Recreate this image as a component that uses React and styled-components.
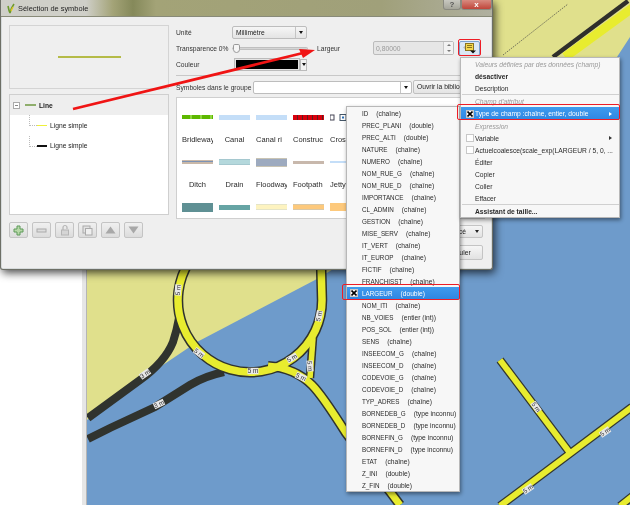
import React from "react";
import styled, {createGlobalStyle} from 'styled-components'

const GlobalStyle = createGlobalStyle`
html, body { margin: 0; padding: 0; background: #fff; }
body { font-family: "Liberation Sans", Arial, sans-serif; font-size: 7px; color: #222; }
`

const Desktop = styled.div`
position: relative;
width: 630px;
height: 505px;
overflow: hidden;
display: flex;
filter: blur(0.25px);
`
const Sidebar = styled.div`
width: 82px;
background: #fff;
`
const Splitter = styled.div`
width: 5px;
background: #e6e6e6;
border-right: 1px solid #b5b5b5;
box-sizing: border-box;
`
const MapPane = styled.div`
flex: 1;
background: #6e9bcb;
svg { display: block; }
`

/* dialog */
const Dialog = styled.div`
position: absolute;
left: 0;
top: 0;
width: 493px;
height: 270px;
box-sizing: border-box;
display: flex;
flex-direction: column;
border: 1px solid #6d6f66;
border-top: 0;
border-radius: 0 0 3px 3px;
background: #d6dadb;
box-shadow: 2px 3px 8px rgba(0,0,0,.7);
`
const TitleBar = styled.div`
height: 17px;
flex: none;
display: flex;
align-items: center;
gap: 3px;
padding-left: 6px;
background: linear-gradient(90deg, #cfcfc8 0, #cfcfc8 85px, #a3a377 112px, #85895a 132px, #a3a377 155px, #a0a07a 380px, #b0b0a0 100%);
border-bottom: 1px solid #888a78;
box-sizing: border-box;
font-size: 7.4px;
color: #222;
`
const TitleButtons = styled.div`
margin-left: auto;
align-self: flex-start;
display: flex;
`
const TitleBtn = styled.div`
height: 10px;
width: ${p => p.$w}px;
border: 1px solid #8a8a80;
border-top: 0;
box-sizing: border-box;
border-radius: 0 0 3px 3px;
display: flex;
align-items: center;
justify-content: center;
font-size: 8px;
font-weight: bold;
color: ${p => p.$close ? '#fff' : '#555'};
background: ${p => p.$close ? 'linear-gradient(#d88b80, #c0453a)' : 'linear-gradient(#c8c8c0, #a5a59a)'};
`
const Body = styled.div`
flex: 1;
margin: 0 1px 1px;
background: #efefef;
display: flex;
gap: 7px;
padding: 8px 6px 0 7px;
`
const LeftCol = styled.div`
width: 160px;
flex: none;
display: flex;
flex-direction: column;
`
const RightCol = styled.div`
flex: 1;
display: flex;
flex-direction: column;
`
const Preview = styled.div`
height: 64px;
box-sizing: border-box;
border: 1px solid #d4d4d4;
display: flex;
align-items: center;
justify-content: center;
`
const PreviewLine = styled.div`
width: 63px;
height: 2px;
background: #b5bb48;
`
const Tree = styled.div`
height: 121px;
margin-top: 5px;
box-sizing: border-box;
border: 1px solid #cfcfcf;
background: #fff;
`
const TreeRow = styled.div`
height: ${p => p.$root ? 20 : 20.5}px;
display: flex;
align-items: center;
gap: 3px;
position: relative;
padding-left: ${p => p.$root ? 3 : 27}px;
background: ${p => p.$root ? '#eeeeee' : 'transparent'};
font-weight: ${p => p.$root ? 'bold' : 'normal'};
font-size: 6.7px;
${p => !p.$root && `
  &::before {
    content: "";
    position: absolute;
    left: 19px;
    top: 0;
    width: 7px;
    height: 10px;
    border-left: 1px dotted #bbb;
    border-bottom: 1px dotted #bbb;
  }
`}
`
const Expander = styled.div`
width: 5px;
height: 5px;
border: 1px solid #aaa;
background: #fff;
margin-right: 2px;
display: flex;
align-items: center;
justify-content: center;
&::after {
  content: "";
  width: 3px;
  height: 1px;
  background: #888;
}
`
const LayerSwatch = styled.div`
width: ${p => p.$w}px;
height: ${p => p.$h}px;
background: ${p => p.$c};
`
const ToolRow = styled.div`
display: flex;
gap: 4px;
margin-top: 7px;
`
const ToolBtn = styled.div`
width: 19px;
height: 16px;
box-sizing: border-box;
border: 1px solid #c4c4c4;
border-radius: 2px;
background: linear-gradient(#f0f0f0, #dcdcdc);
display: flex;
align-items: center;
justify-content: center;
`
const FormRow = styled.div`
display: flex;
align-items: center;
height: ${p => p.$h}px;
margin-top: ${p => p.$mt || 0}px;
`
const Label = styled.div`
width: ${p => p.$w}px;
flex: none;
font-size: 6.7px;
color: #333;
white-space: nowrap;
`
const Combo = styled.div`
width: ${p => p.$w}px;
height: 13px;
flex: none;
box-sizing: border-box;
border: 1px solid #bdbdbd;
border-radius: 2px;
background: ${p => p.$white ? '#fff' : 'linear-gradient(#f6f6f6, #e4e4e4)'};
display: flex;
align-items: center;
justify-content: space-between;
padding-left: 3px;
font-size: 6.7px;
overflow: hidden;
`
const Arrow = styled.div`
width: 10px;
height: 100%;
border-left: 1px solid #c4c4c4;
display: flex;
align-items: center;
justify-content: center;
&::after {
  content: "";
  border: 2.5px solid transparent;
  border-top: 3px solid #111;
  border-bottom: 0;
}
`
const Slider = styled.div`
width: 76px;
flex: none;
position: relative;
height: 3px;
margin-right: 9px;
background: #d5d5d5;
border: 1px solid #c0c0c0;
box-sizing: border-box;
border-radius: 2px;
`
const SliderHandle = styled.div`
position: absolute;
left: 0;
top: -4px;
width: 7px;
height: 9px;
border: 1px solid #999;
border-radius: 2px 2px 4px 4px;
box-sizing: border-box;
background: #f6f6f6;
`
const Spin = styled.div`
width: 81px;
height: 14px;
flex: none;
box-sizing: border-box;
border: 1px solid #bcbcbc;
border-radius: 2px;
background: #e6e6e6;
color: #9a9a9a;
font-size: 6.8px;
display: flex;
align-items: center;
justify-content: space-between;
padding-left: 2px;
`
const SpinBtns = styled.div`
width: 9px;
height: 100%;
border-left: 1px solid #c8c8c8;
background: #f2f2f2;
display: flex;
flex-direction: column;
align-items: center;
justify-content: space-around;
`
const SpinTri = styled.div`
border: 2px solid transparent;
${p => p.$up ? 'border-bottom: 2px solid #777; border-top: 0;' : 'border-top: 2px solid #777; border-bottom: 0;'}
`
const DefinedBtn = styled.div`
width: 21px;
height: 15px;
margin-left: 5px;
flex: none;
box-sizing: border-box;
border: 1px solid #7da2ce;
border-radius: 2px;
background: #dbe7f5;
display: flex;
align-items: center;
justify-content: center;
`
const ColorBtn = styled.div`
width: 66px;
height: 13px;
margin-left: 2px;
flex: none;
background: #000;
border: 2px solid #e4e4e4;
outline: 1px solid #bbb;
outline-offset: -1px;
box-sizing: border-box;
`
const ColorDrop = styled.div`
width: 7px;
height: 12px;
flex: none;
box-sizing: border-box;
border: 1px solid #bbb;
background: #f2f2f2;
display: flex;
align-items: center;
justify-content: center;
&::after {
  content: "";
  border: 2px solid transparent;
  border-top: 3px solid #111;
  border-bottom: 0;
}
`
const Separator = styled.div`
height: 1px;
background: #c8c8c8;
margin-top: 4px;
`
const LibButton = styled.div`
margin-left: 1px;
height: 14px;
flex: 1;
box-sizing: border-box;
border: 1px solid #c0c0c0;
border-radius: 2px;
background: linear-gradient(#f6f6f6, #e4e4e4);
font-size: 6.7px;
padding: 2px 3px;
white-space: nowrap;
overflow: hidden;
`
const SymbolList = styled.div`
height: 122px;
margin-top: 3px;
box-sizing: border-box;
border: 1px solid #cfcfcf;
background: #fff;
display: grid;
grid-template-columns: repeat(5, 31px);
grid-auto-rows: 22.5px;
column-gap: 6px;
padding: 8px 0 0 5px;
overflow: hidden;
`
const SymbolCell = styled.div`
display: flex;
align-items: center;
justify-content: ${p => p.$left ? 'flex-start' : 'center'};
font-size: 7.5px;
white-space: nowrap;
overflow: hidden;
color: #2a2a2a;
`
const Swatch = styled.div`
width: 100%;
height: ${p => p.$h}px;
background: ${p => p.$bg};
border-top: ${p => p.$edge ? `1px solid ${p.$edge}` : '0'};
border-bottom: ${p => p.$edge ? `1px solid ${p.$edge}` : '0'};
`
const BottomRow = styled.div`
display: flex;
justify-content: flex-end;
margin-top: ${p => p.$mt}px;
padding-right: 2px;
`
const PushButton = styled.div`
width: ${p => p.$w}px;
height: ${p => p.$h}px;
box-sizing: border-box;
border: 1px solid #c4c4c4;
border-radius: 2px;
background: linear-gradient(#f6f6f6, #e2e2e2);
display: flex;
align-items: center;
justify-content: ${p => p.$end ? 'flex-end' : 'center'};
gap: 9px;
font-size: 6.8px;
`
const DropTri = styled.div`
margin-right: 3px;
border: 2px solid transparent;
border-top: 3px solid #222;
border-bottom: 0;
`

/* menus */
const Menu = styled.div`
position: absolute;
left: ${p => p.$x}px;
top: ${p => p.$y}px;
width: ${p => p.$w}px;
box-sizing: border-box;
background: #f7f7f7;
border: 1px solid #b8b8b8;
box-shadow: 1px 2px 4px rgba(0,0,0,.45);
`
const MenuItem = styled.div`
height: ${p => p.$h || 12}px;
display: flex;
align-items: center;
padding-left: ${p => p.$pad || 14}px;
font-size: 6.7px;
white-space: nowrap;
position: relative;
color: ${p => p.$active ? '#fff' : p.$muted ? '#999' : '#2a2a2a'};
font-style: ${p => p.$muted ? 'italic' : 'normal'};
font-weight: ${p => p.$bold ? 'bold' : 'normal'};
background: ${p => p.$active ? 'linear-gradient(#3f9bee, #2f86e2)' : 'transparent'};
`
const MenuSep = styled.div`
height: 1px;
background: #d0d0d0;
margin-left: 1px;
`
const Tick = styled.div`
position: absolute;
left: ${p => p.$x}px;
top: 50%;
margin-top: -4px;
width: 8px;
height: 8px;
box-sizing: border-box;
border: 1px solid #c8c8c8;
background: #fff;
display: flex;
`
const SubArrow = styled.div`
position: absolute;
right: 7px;
top: 50%;
margin-top: -2px;
border: 2px solid transparent;
border-left: 3px solid ${p => p.$light ? '#fff' : '#333'};
border-right: 0;
`
const FieldName = styled.span`
font-size: 6.3px;
margin-right: 8px;
`

/* red annotations drawn on top of the screenshot */
const Highlight = styled.div`
position: absolute;
left: ${p => p.$x}px;
top: ${p => p.$y}px;
width: ${p => p.$w}px;
height: ${p => p.$h}px;
box-sizing: border-box;
border: 1px solid #ee1c25;
border-radius: 2px;
`
const ArrowLayer = styled.svg`
position: absolute;
left: 0;
top: 0;
pointer-events: none;
`

const symbols = [
    {bg: 'repeating-linear-gradient(90deg, #5db800 0 8px, #8fd640 8px 10px)', h: 4, label: 'Bridleway', left: true},
    {bg: '#c4def8', h: 5, label: 'Canal'},
    {bg: '#c4def8', h: 5, label: 'Canal ri', left: true},
    {bg: 'repeating-linear-gradient(90deg, #d8000c 0 4px, #602020 4px 5px)', h: 5, label: 'Construc', left: true},
    {label: 'Cros', left: true, marker: true},
    {bg: 'linear-gradient(#c9b8a8 0 25%, #7c93b5 25% 50%, #fff 50% 60%, #c9b8a8 60%)', h: 4, label: 'Ditch'},
    {bg: '#b4d8dc', h: 4, edge: '#a5c8cf', label: 'Drain'},
    {bg: '#9daabf', h: 7, edge: '#c9c4b4', label: 'Floodway', left: true},
    {bg: '#c8b8ac', h: 3, label: 'Footpath', left: true},
    {bg: '#c4def8', h: 2, label: 'Jetty', left: true},
    {bg: '#5f9094', h: 9},
    {bg: '#66a4a4', h: 5},
    {bg: '#fdf3c0', h: 4, edge: '#e4e4c8'},
    {bg: '#fdc97c', h: 4, edge: '#d8c8a8'},
    {bg: '#fdc97c', h: 8},
]
const symbolRows = [symbols.slice(0, 5), symbols.slice(5, 10), symbols.slice(10)]

const fields = [
    ['ID', 'chaîne'], ['PREC_PLANI', 'double'], ['PREC_ALTI', 'double'], ['NATURE', 'chaîne'],
    ['NUMERO', 'chaîne'], ['NOM_RUE_G', 'chaîne'], ['NOM_RUE_D', 'chaîne'], ['IMPORTANCE', 'chaîne'],
    ['CL_ADMIN', 'chaîne'], ['GESTION', 'chaîne'], ['MISE_SERV', 'chaîne'], ['IT_VERT', 'chaîne'],
    ['IT_EUROP', 'chaîne'], ['FICTIF', 'chaîne'], ['FRANCHISST', 'chaîne'], ['LARGEUR', 'double'],
    ['NOM_ITI', 'chaîne'], ['NB_VOIES', 'entier (int)'], ['POS_SOL', 'entier (int)'], ['SENS', 'chaîne'],
    ['INSEECOM_G', 'chaîne'], ['INSEECOM_D', 'chaîne'], ['CODEVOIE_G', 'chaîne'], ['CODEVOIE_D', 'chaîne'],
    ['TYP_ADRES', 'chaîne'], ['BORNEDEB_G', 'type inconnu'], ['BORNEDEB_D', 'type inconnu'],
    ['BORNEFIN_G', 'type inconnu'], ['BORNEFIN_D', 'type inconnu'], ['ETAT', 'chaîne'], ['Z_INI', 'double'], ['Z_FIN', 'double'],
]

const RoadLabel = ({x, y, r, text = '5 m'}) => (
    <g transform={`translate(${x} ${y}) rotate(${r})`}>
        <rect x="-5.5" y="-3.2" width="11" height="6.4" fill="#e8e8e8"/>
        <text x="0" y="2.2" fontSize="6.4" textAnchor="middle" fill="#333" fontFamily="Liberation Sans, sans-serif">{text}</text>
    </g>
)

const circleRoad = 'M189 262 A72 72 0 1 0 322 300 L321 262'
const branchRoad = 'M268 366 Q295 368 312 385 Q322 395 346 433 L400 505'
const islandRoad = 'M313 338 L310 378'

const MapDrawing = () => (
    <svg width="543" height="505" viewBox="87 0 543 505">
        <polygon points="87,0 630,0 630,37 617,57 340,265 315,280 197,342 160,367 87,420" fill="#e0e08c"/>
        <path d="M503 55 L568 4" stroke="#444" strokeWidth="0.7" strokeDasharray="1.5 1" fill="none"/>
        <path d="M628 1 L553 57" stroke="#2f2f2b" strokeWidth="4.5" fill="none"/>
        <path d="M638 4 L565 57" stroke="#e8ec2f" strokeWidth="9" fill="none"/>

        <path d="M88 418 L140 380 Q165 362 173 342 Q177 330 179 318" stroke="#30332e" strokeWidth="8" fill="none"/>
        <path d="M88 439 L110 428 L155 407 L190 385 Q205 376 224 372" stroke="#30332e" strokeWidth="8" fill="none"/>

        <g fill="none" strokeLinejoin="round">
            <path d={circleRoad} stroke="#30332e" strokeWidth="10.5"/>
            <path d={branchRoad} stroke="#30332e" strokeWidth="10"/>
            <path d={islandRoad} stroke="#30332e" strokeWidth="8.5"/>
            <path d={circleRoad} stroke="#e8ec2f" strokeWidth="7.5"/>
            <path d={branchRoad} stroke="#e8ec2f" strokeWidth="7"/>
            <path d={islandRoad} stroke="#e8ec2f" strokeWidth="5.5"/>
        </g>

        <g fill="none">
            <path d="M500 360 L570 453 M500 506 L632 407 M620 506 L634 495" stroke="#33362f" strokeWidth="8.5"/>
            <path d="M500 360 L570 453 M500 506 L632 407 M620 506 L634 495" stroke="#e8ec2f" strokeWidth="6"/>
        </g>

        <RoadLabel x={178} y={290} r={-85}/>
        <RoadLabel x={319} y={316} r={-78}/>
        <RoadLabel x={199} y={353} r={38}/>
        <RoadLabel x={253} y={371} r={0}/>
        <RoadLabel x={292} y={358} r={-30}/>
        <RoadLabel x={310} y={366} r={85}/>
        <RoadLabel x={301} y={377} r={25}/>
        <RoadLabel x={145} y={374} r={-35} text="3 m"/>
        <RoadLabel x={159} y={404} r={-25} text="3 m"/>
        <RoadLabel x={536} y={407} r={55}/>
        <RoadLabel x={605} y={432} r={-35}/>
        <RoadLabel x={528} y={489} r={-35}/>
    </svg>
)

const CrossMark = () => (
    <svg width="6" height="6" viewBox="0 0 6 6">
        <path d="M0.5 0.5 L5.5 5.5 M5.5 0.5 L0.5 5.5" stroke="#000" strokeWidth="1.6"/>
    </svg>
)

const App = () => {

    return (
        <Desktop>
            <GlobalStyle/>
            <Sidebar/>
            <Splitter/>
            <MapPane><MapDrawing/></MapPane>

            <Dialog>
                <TitleBar>
                    <svg width="8" height="11" viewBox="0 0 8 11">
                        <path d="M1 3 Q2 8 3 10 M3 10 Q4 5 7 1" stroke="#6c9a2c" strokeWidth="1.6" fill="none"/>
                        <path d="M4 8 L6 4" stroke="#e0c820" strokeWidth="1.4"/>
                    </svg>
                    Sélection de symbole
                    <TitleButtons>
                        <TitleBtn $w={18}>?</TitleBtn>
                        <TitleBtn $w={31} $close>x</TitleBtn>
                    </TitleButtons>
                </TitleBar>
                <Body>
                    <LeftCol>
                        <Preview><PreviewLine/></Preview>
                        <Tree>
                            <TreeRow $root>
                                <Expander/>
                                <LayerSwatch $w={11} $h={2} $c="#8fae6c"/>
                                Line
                            </TreeRow>
                            <TreeRow>
                                <LayerSwatch $w={10} $h={1} $c="#eef03a"/>
                                Ligne simple
                            </TreeRow>
                            <TreeRow>
                                <LayerSwatch $w={10} $h={2} $c="#111"/>
                                Ligne simple
                            </TreeRow>
                        </Tree>
                        <ToolRow>
                            <ToolBtn>
                                <svg width="11" height="11" viewBox="0 0 11 11">
                                    <path d="M4 1h3v3h3v3H7v3H4V7H1V4h3z" fill="#b7d8a8" stroke="#5c9a58"/>
                                </svg>
                            </ToolBtn>
                            <ToolBtn>
                                <svg width="11" height="5" viewBox="0 0 11 5"><rect x="1" y="1" width="9" height="3" fill="#ddd" stroke="#aaa"/></svg>
                            </ToolBtn>
                            <ToolBtn>
                                <svg width="10" height="12" viewBox="0 0 10 12">
                                    <path d="M3 6V3.5a2 2 0 0 1 4 0V5" fill="none" stroke="#b5b5b5" strokeWidth="1.2"/>
                                    <rect x="1.5" y="6" width="7" height="5" fill="#d5d5d5" stroke="#b5b5b5"/>
                                </svg>
                            </ToolBtn>
                            <ToolBtn>
                                <svg width="11" height="11" viewBox="0 0 11 11">
                                    <rect x="1" y="1" width="7" height="7" fill="#e2e2e2" stroke="#aaa"/>
                                    <rect x="3.5" y="3.5" width="6.5" height="6.5" fill="#efefef" stroke="#aaa"/>
                                </svg>
                            </ToolBtn>
                            <ToolBtn>
                                <svg width="11" height="8" viewBox="0 0 11 8"><path d="M5.5 0.5 L10.5 7.5 H0.5z" fill="#a8a8a8"/></svg>
                            </ToolBtn>
                            <ToolBtn>
                                <svg width="11" height="8" viewBox="0 0 11 8"><path d="M0.5 0.5 H10.5 L5.5 7.5z" fill="#a8a8a8"/></svg>
                            </ToolBtn>
                        </ToolRow>
                    </LeftCol>

                    <RightCol>
                        <FormRow $h={13} $mt={1}>
                            <Label $w={56}>Unité</Label>
                            <Combo $w={75}>Millimètre<Arrow/></Combo>
                        </FormRow>
                        <FormRow $h={14} $mt={2}>
                            <Label $w={56}>Transparence 0%</Label>
                            <Slider><SliderHandle/></Slider>
                            <Label $w={56}>Largeur</Label>
                            <Spin>
                                0,80000
                                <SpinBtns><SpinTri $up/><SpinTri/></SpinBtns>
                            </Spin>
                            <DefinedBtn>
                                <svg width="15" height="12" viewBox="0 0 15 12">
                                    <path d="M1 5.5 L4 3 V8z" fill="#b9b9b9"/>
                                    <rect x="3.5" y="1.5" width="8" height="7" fill="#f4d64e" stroke="#8a7420"/>
                                    <path d="M5 3.5h5M5 5.5h5" stroke="#6b5a10" strokeWidth="0.8"/>
                                    <path d="M8 8.5h6l-3 3z" fill="#111"/>
                                </svg>
                            </DefinedBtn>
                        </FormRow>
                        <FormRow $h={13} $mt={3}>
                            <Label $w={56}>Couleur</Label>
                            <ColorBtn/>
                            <ColorDrop/>
                        </FormRow>
                        <Separator/>
                        <FormRow $h={14} $mt={4}>
                            <Label $w={77}>Symboles dans le groupe</Label>
                            <Combo $w={159} $white><span/><Arrow/></Combo>
                            <LibButton>Ouvrir la biblio</LibButton>
                        </FormRow>
                        <SymbolList>
                            {symbolRows.map((row, r) => (
                                <React.Fragment key={r}>
                                    {row.map((s, i) => (
                                        <SymbolCell key={i}>
                                            {s.marker
                                                ? <svg width="31" height="7" viewBox="0 0 31 7">
                                                    <rect x="0" y="1" width="4" height="5" fill="#fff" stroke="#445"/>
                                                    <rect x="10" y="0.5" width="6" height="6" fill="#fff" stroke="#456"/>
                                                    <rect x="12" y="2.5" width="2" height="2" fill="#2a6fb5"/>
                                                </svg>
                                                : <Swatch $bg={s.bg} $h={s.h} $edge={s.edge}/>}
                                        </SymbolCell>
                                    ))}
                                    {r < 2 && row.map((s, i) => (
                                        <SymbolCell key={i} $left={s.left}>{s.label}</SymbolCell>
                                    ))}
                                </React.Fragment>
                            ))}
                        </SymbolList>
                        <BottomRow $mt={6}>
                            <PushButton $w={60} $h={13} $end>Avancé<DropTri/></PushButton>
                        </BottomRow>
                        <BottomRow $mt={7}>
                            <PushButton $w={48} $h={15}>Annuler</PushButton>
                        </BottomRow>
                    </RightCol>
                </Body>
            </Dialog>

            <Menu $x={346} $y={106} $w={114}>
                {fields.map(([name, type]) => (
                    <MenuItem key={name} $pad={15} $active={name === 'LARGEUR'}>
                        {name === 'LARGEUR' && <Tick $x={3}><CrossMark/></Tick>}
                        <FieldName>{name}</FieldName>({type})
                    </MenuItem>
                ))}
            </Menu>

            <Menu $x={460} $y={57} $w={160}>
                <MenuItem $muted>Valeurs définies par des données (champ)</MenuItem>
                <MenuItem $bold>désactiver</MenuItem>
                <MenuItem>Description</MenuItem>
                <MenuSep/>
                <MenuItem $muted>Champ d'attribut</MenuItem>
                <MenuItem $active $h={13}>
                    <Tick $x={5}><CrossMark/></Tick>
                    Type de champ :chaîne, entier, double
                    <SubArrow $light/>
                </MenuItem>
                <MenuItem $muted>Expression</MenuItem>
                <MenuItem><Tick $x={5}/>Variable<SubArrow/></MenuItem>
                <MenuItem><Tick $x={5}/>Actuelcoalesce(scale_exp(LARGEUR / 5, 0, ...</MenuItem>
                <MenuItem>Éditer</MenuItem>
                <MenuItem>Copier</MenuItem>
                <MenuItem>Coller</MenuItem>
                <MenuItem>Effacer</MenuItem>
                <MenuSep/>
                <MenuItem $bold>Assistant de taille...</MenuItem>
            </Menu>

            <Highlight $x={458} $y={39} $w={23} $h={17}/>
            <Highlight $x={457} $y={104} $w={163} $h={16}/>
            <Highlight $x={342} $y={284} $w={118} $h={16}/>

            <ArrowLayer width="630" height="505" viewBox="0 0 630 505">
                <path d="M73 109 L303 53" stroke="#f01414" strokeWidth="2.8"/>
                <polygon points="315,50 299,49 303,58" fill="#f01414"/>
            </ArrowLayer>
        </Desktop>
    )
}

export default App;
